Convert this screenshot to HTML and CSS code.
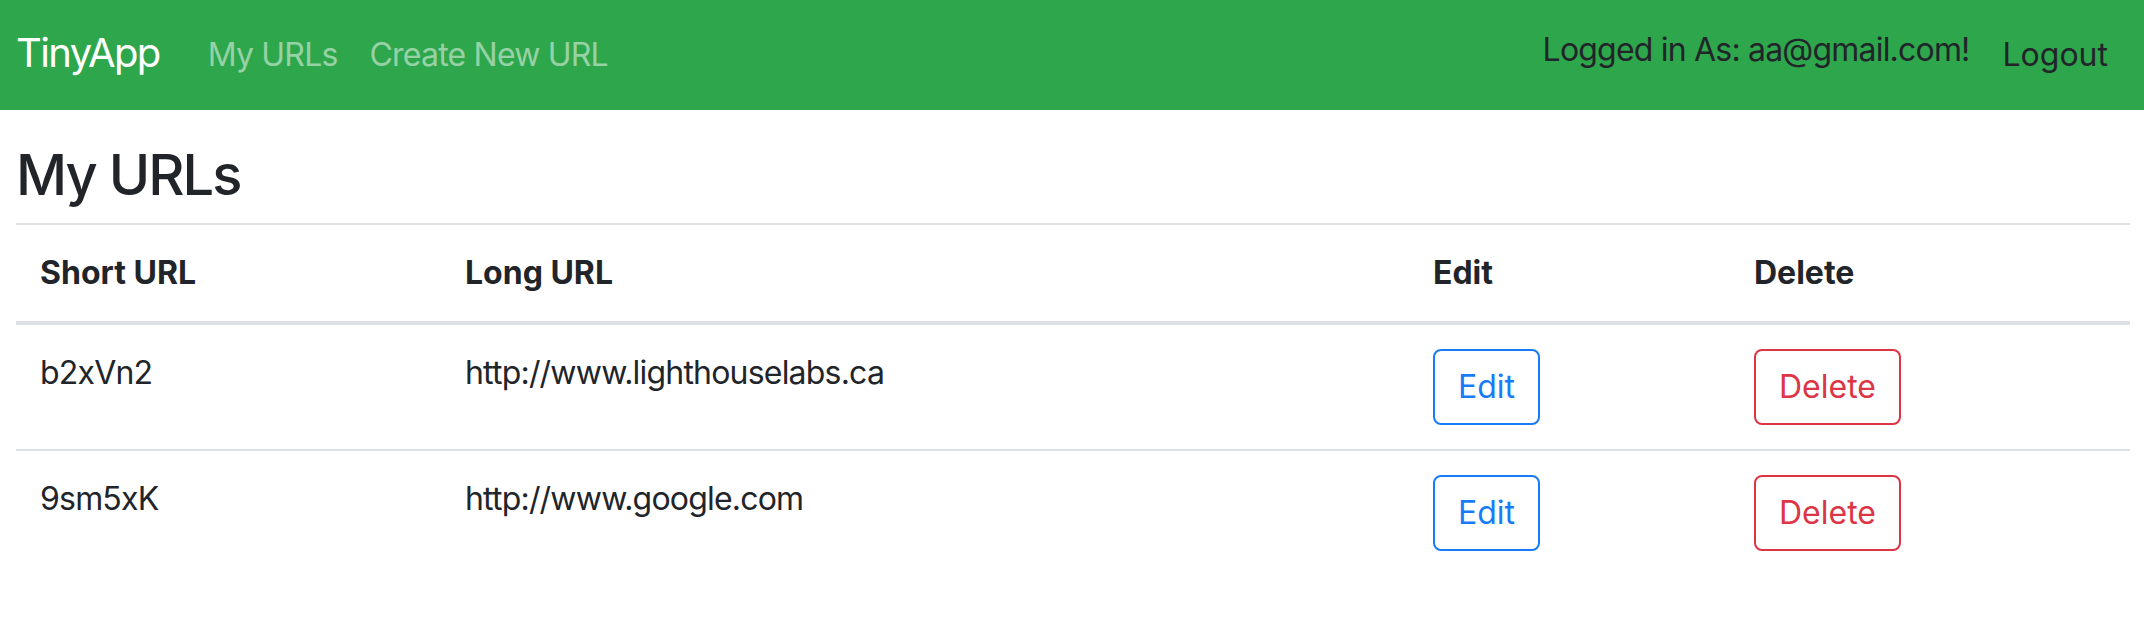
FILE: index.html
```html
<!DOCTYPE html>
<html lang="en">
<head>
<meta charset="utf-8">
<title>TinyApp</title>
<link rel="stylesheet" href="styles.css">
</head>
<body>
<nav class="navbar">
  <a class="brand" href="#">TinyApp</a>
  <ul class="nav">
    <li><a class="nav-link" href="#">My URLs</a></li>
    <li><a class="nav-link" href="#">Create New URL</a></li>
  </ul>
  <div class="user">
    <span class="login">Logged in As: aa@gmail.com!</span>
    <button class="logout" type="button">Logout</button>
  </div>
</nav>
<main class="container">
  <h1 class="title">My URLs</h1>
  <table class="urls">
    <colgroup>
      <col class="c-short">
      <col class="c-long">
      <col class="c-edit">
      <col class="c-delete">
    </colgroup>
    <thead>
      <tr><th>Short URL</th><th>Long URL</th><th>Edit</th><th>Delete</th></tr>
    </thead>
    <tbody>
      <tr>
        <td>b2xVn2</td>
        <td>http://www.lighthouselabs.ca</td>
        <td><button class="btn btn-edit" type="button">Edit</button></td>
        <td><button class="btn btn-delete" type="button">Delete</button></td>
      </tr>
      <tr>
        <td>9sm5xK</td>
        <td>http://www.google.com</td>
        <td><button class="btn btn-edit" type="button">Edit</button></td>
        <td><button class="btn btn-delete" type="button">Delete</button></td>
      </tr>
    </tbody>
  </table>
</main>
</body>
</html>
```
FILE: styles.css
```css
* { box-sizing: border-box; }
html, body { margin: 0; padding: 0; }
body {
  font-family: Inter, "Liberation Sans", sans-serif;
  font-size: 32px;
  line-height: 1.5;
  letter-spacing: -0.025em;
  color: #212529;
  background: #fff;
}
.navbar {
  display: flex;
  align-items: center;
  height: 110px;
  padding: 0 12px 0 16px;
  background: #2ea64c;
}
.brand {
  font-size: 40px;
  line-height: 60px;
  letter-spacing: -0.04em;
  color: #fff;
  text-decoration: none;
  margin-right: 32px;
  margin-top: -4px;
}
.nav {
  display: flex;
  list-style: none;
  margin: 0;
  padding: 0;
  flex: 1;
}
.nav-link {
  display: block;
  padding: 0 16px;
  color: rgba(255,255,255,0.5);
  text-decoration: none;
}
.user {
  display: flex;
  align-items: center;
}
.login {
  margin-top: -10px;
}
.logout {
  font: inherit;
  color: #212529;
  background: transparent;
  border: 2px solid transparent;
  padding: 10px 22px;
  margin-left: 9px;
  line-height: 48px;
}
.container {
  padding: 32px 14px 0 16px;
}
.title {
  font-size: 56px;
  font-weight: 500;
  line-height: 1.2;
  letter-spacing: -0.035em;
  margin: 0 0 14px;
}
.urls {
  width: 100%;
  border-collapse: collapse;
  table-layout: fixed;
}
.c-short { width: 425px; }
.c-long { width: 968px; }
.c-edit { width: 321px; }
.c-delete { width: 400px; }
.urls th, .urls td {
  padding: 24px;
  text-align: left;
  vertical-align: top;
  border-top: 2px solid #dee2e6;
}
.urls th {
  font-weight: 700;
  letter-spacing: 0;
  border-bottom: 4px solid #dee2e6;
}
.btn {
  font: inherit;
  line-height: 48px;
  padding: 12px 23px;
  border-radius: 8px;
  background: #fff;
  border: 2px solid;
  cursor: pointer;
}
.btn-edit { color: #187cf9; border-color: #187cf9; }
.btn-delete { color: #dc3545; border-color: #dc3545; }
```
